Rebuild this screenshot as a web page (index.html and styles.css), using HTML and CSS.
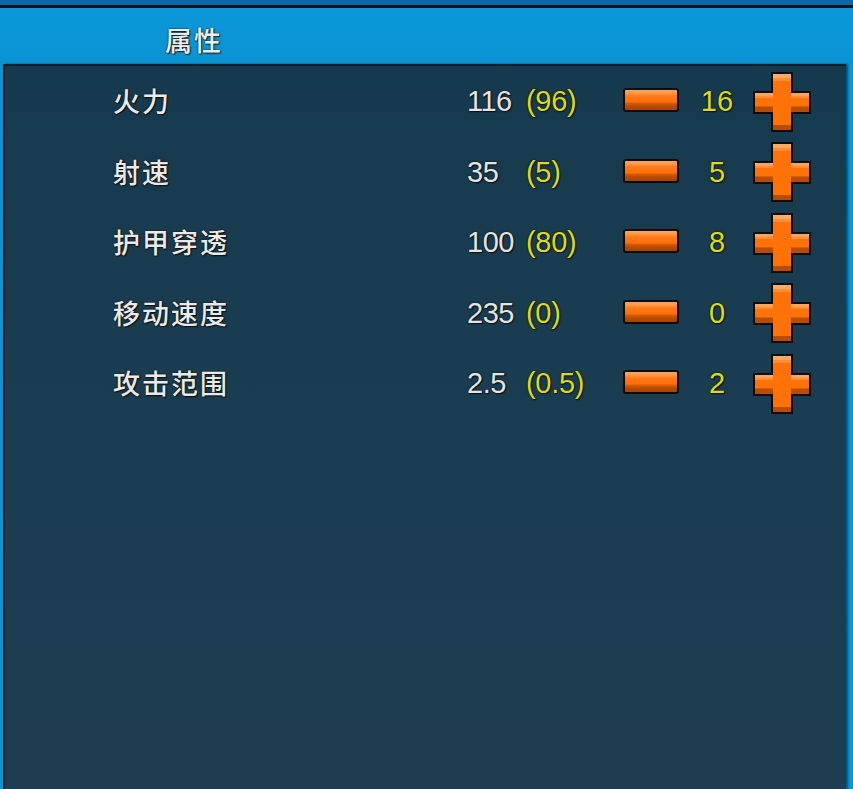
FILE: index.html
```html
<!DOCTYPE html>
<html lang="zh">
<head>
<meta charset="utf-8">
<link rel="stylesheet" href="styles.css">
</head>
<body>
<div class="frame">
  <div class="topbar"></div>
  <div class="rule"></div>
  <div class="header"><span class="title">属性</span></div>
  <div class="panel">
    <div class="row">
      <span class="label">火力</span><span class="val">116</span><span class="bonus">(96)</span>
      <span class="minus"></span><span class="count">16</span>
      <svg class="plus" viewBox="0 0 58 60" width="58" height="60"><use href="#plus"/></svg>
    </div>
    <div class="row">
      <span class="label">射速</span><span class="val">35</span><span class="bonus">(5)</span>
      <span class="minus"></span><span class="count">5</span>
      <svg class="plus" viewBox="0 0 58 60" width="58" height="60"><use href="#plus"/></svg>
    </div>
    <div class="row">
      <span class="label">护甲穿透</span><span class="val">100</span><span class="bonus">(80)</span>
      <span class="minus"></span><span class="count">8</span>
      <svg class="plus" viewBox="0 0 58 60" width="58" height="60"><use href="#plus"/></svg>
    </div>
    <div class="row">
      <span class="label">移动速度</span><span class="val">235</span><span class="bonus">(0)</span>
      <span class="minus"></span><span class="count">0</span>
      <svg class="plus" viewBox="0 0 58 60" width="58" height="60"><use href="#plus"/></svg>
    </div>
    <div class="row">
      <span class="label">攻击范围</span><span class="val">2.5</span><span class="bonus">(0.5)</span>
      <span class="minus"></span><span class="count">2</span>
      <svg class="plus" viewBox="0 0 58 60" width="58" height="60"><use href="#plus"/></svg>
    </div>
  </div>
</div>
<svg class="defs" width="0" height="0">
  <defs>
    <g id="plus">
      <path d="M18 0 H40 V19 H58 V42 H40 V60 H18 V42 H0 V19 H18 Z" fill="#0d0d0d"/>
      <rect x="2" y="21" width="54" height="19" fill="#ff7208"/>
      <rect x="2" y="21" width="54" height="3" fill="#ffa356"/>
      <rect x="2" y="24" width="54" height="2" fill="#ff8c36"/>
      <rect x="2" y="35" width="54" height="5" fill="#b84c00"/>
      <rect x="2" y="34" width="54" height="1" fill="#d85c00"/>
      <rect x="20" y="2" width="18" height="56" fill="#ff7208"/>
      <rect x="20" y="2" width="18" height="4" fill="#ffaa60"/>
      <rect x="20" y="6" width="18" height="3" fill="#ff8c36"/>
      <rect x="20" y="53" width="18" height="5" fill="#b84c00"/>
    </g>
  </defs>
</svg>
</body>
</html>
```
FILE: styles.css
```css
html, body {
  margin: 0;
  padding: 0;
}
body {
  width: 853px;
  height: 789px;
  overflow: hidden;
  background: #0b95d5;
  font-family: "Liberation Sans", "Noto Sans CJK SC", sans-serif;
}
.frame {
  display: flex;
  flex-direction: column;
  height: 789px;
}
.topbar {
  height: 5px;
  background: #0a68a6;
}
.rule {
  height: 3px;
  background: #06121a;
}
.header {
  height: 56px;
  background: linear-gradient(180deg, #0b97d8 0%, #0a93d3 100%);
  display: flex;
  align-items: center;
  padding-left: 165px;
}
.title {
  font-family: "Noto Sans CJK SC", sans-serif;
  font-size: 27px;
  font-weight: 500;
  color: #eeeeee;
  letter-spacing: 2px;
  margin-top: 6px;
  text-shadow: 0 0 2px #1a1a1a, 1px 1px 1px #222;
}
.panel {
  flex: 1;
  margin-left: 3px;
  margin-right: 7px;
  border-left: 2px solid #0d1e28;
  border-top: 2px solid #0d1e28;
  background: linear-gradient(180deg, #163a4d 0%, #1b3d51 50%, #1e3d51 100%);
  box-shadow: 2px 0 2px rgba(0, 0, 0, 0.45);
  display: flex;
  flex-direction: column;
}
.row {
  height: 70.5px;
  display: grid;
  grid-template-columns: 354px 59px 97px 56px 74px 58px;
  align-items: center;
  padding-left: 108px;
}
.label {
  font-family: "Noto Sans CJK SC", sans-serif;
  font-size: 27px;
  font-weight: 500;
  letter-spacing: 2px;
  color: #eaeaea;
  text-shadow: 0 0 2px #0a0a0a, 1px 1px 1px #111;
  margin-top: -1px;
}
.val {
  font-size: 29px;
  color: #e4e4e4;
  letter-spacing: -0.5px;
  text-shadow: 0 0 2px #0a0a0a, 1px 1px 1px #111;
  margin-top: 1px;
}
.bonus {
  font-size: 29px;
  color: #dcdc10;
  letter-spacing: -0.3px;
  text-shadow: 0 0 2px #101000, 1px 1px 1px #111;
  margin-top: 1px;
}
.count {
  font-size: 29px;
  color: #dcdc10;
  text-align: center;
  padding-left: 2px;
  text-shadow: 0 0 2px #101000, 1px 1px 1px #111;
  margin-top: 1px;
}
.minus {
  height: 24px;
  margin-top: -2px;
  box-sizing: border-box;
  border: 2px solid #0d0d0d;
  border-radius: 3px;
  background: linear-gradient(180deg, #ffa658 0%, #ff9a48 15%, #ff7a1c 30%, #ff6e08 60%, #d85c00 66%, #b84c00 80%, #a84400 100%);
}
.plus {
  display: block;
  margin-top: 1px;
}
.defs {
  position: absolute;
  width: 0;
  height: 0;
}
```
